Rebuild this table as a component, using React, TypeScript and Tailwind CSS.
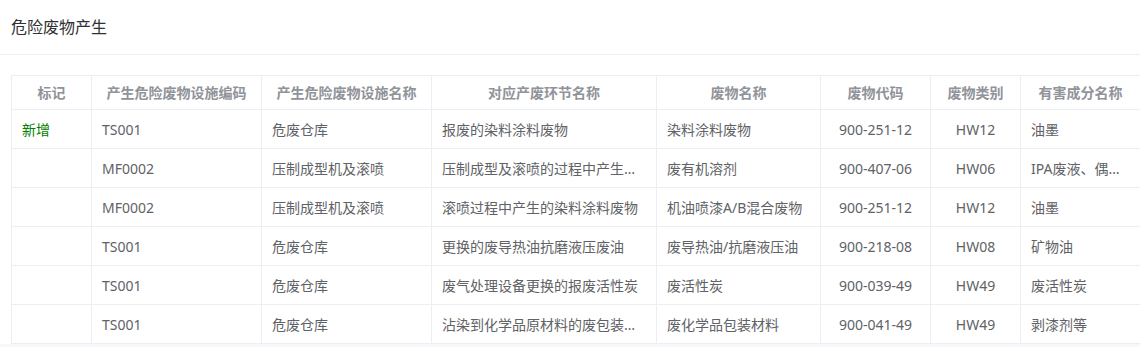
import React from 'react'

const columns = [
  { title: '标记', width: 80, align: 'left' },
  { title: '产生危险废物设施编码', width: 170, align: 'left' },
  { title: '产生危险废物设施名称', width: 170, align: 'left' },
  { title: '对应产废环节名称', width: 225, align: 'left' },
  { title: '废物名称', width: 164, align: 'left' },
  { title: '废物代码', width: 110, align: 'center' },
  { title: '废物类别', width: 90, align: 'center' },
  { title: '有害成分名称', width: 120, align: 'left' },
]

const tableWidth = columns.reduce((s, c) => s + c.width, 0)

const rows = [
  ['新增', 'TS001', '危废仓库', '报废的染料涂料废物', '染料涂料废物', '900-251-12', 'HW12', '油墨'],
  ['', 'MF0002', '压制成型机及滚喷', '压制成型及滚喷的过程中产生的废有机溶剂', '废有机溶剂', '900-407-06', 'HW06', 'IPA废液、偶联剂'],
  ['', 'MF0002', '压制成型机及滚喷', '滚喷过程中产生的染料涂料废物', '机油喷漆A/B混合废物', '900-251-12', 'HW12', '油墨'],
  ['', 'TS001', '危废仓库', '更换的废导热油抗磨液压废油', '废导热油/抗磨液压油', '900-218-08', 'HW08', '矿物油'],
  ['', 'TS001', '危废仓库', '废气处理设备更换的报废活性炭', '废活性炭', '900-039-49', 'HW49', '废活性炭'],
  ['', 'TS001', '危废仓库', '沾染到化学品原材料的废包装材料', '废化学品包装材料', '900-041-49', 'HW49', '剥漆剂等'],
]

export default function App() {
  return (
    <div
      className="w-[1140px] h-[347px] overflow-hidden bg-white"
      style={{ fontFamily: '"Noto Sans", "Noto Sans CJK SC", sans-serif' }}
    >
      {/* 标题 */}
      <div className="h-[55px] flex items-center px-[11px] border-b border-[#ebeef5] text-[16px] text-[#303133]">
        危险废物产生
      </div>

      <div className="pt-[20px] pl-[11px]">
        <div className="overflow-hidden">
          <table className="table-fixed border-collapse text-[14px]" style={{ width: tableWidth }}>
            <colgroup>
              {columns.map((c) => (
                <col key={c.title} style={{ width: c.width }} />
              ))}
            </colgroup>
            <thead>
              <tr className="h-[34px]">
                {columns.map((c) => (
                  <th
                    key={c.title}
                    className="border border-[#ebeef5] text-center font-bold text-[#909399] px-[10px] truncate"
                  >
                    {c.title}
                  </th>
                ))}
              </tr>
            </thead>
            <tbody>
              {rows.map((r, i) => (
                <tr key={i} className="h-[39px]">
                  {r.map((cell, j) => (
                    <td
                      key={j}
                      className={
                        'border border-[#ebeef5] px-[10px] truncate ' +
                        (columns[j].align === 'center' ? 'text-center ' : 'text-left ') +
                        (j === 0 ? 'text-[#008000]' : 'text-[#606266]')
                      }
                    >
                      {cell}
                    </td>
                  ))}
                </tr>
              ))}
            </tbody>
          </table>
        </div>
      </div>
      <div className="h-[4px] bg-[#f7f8fa]" />
    </div>
  )
}
